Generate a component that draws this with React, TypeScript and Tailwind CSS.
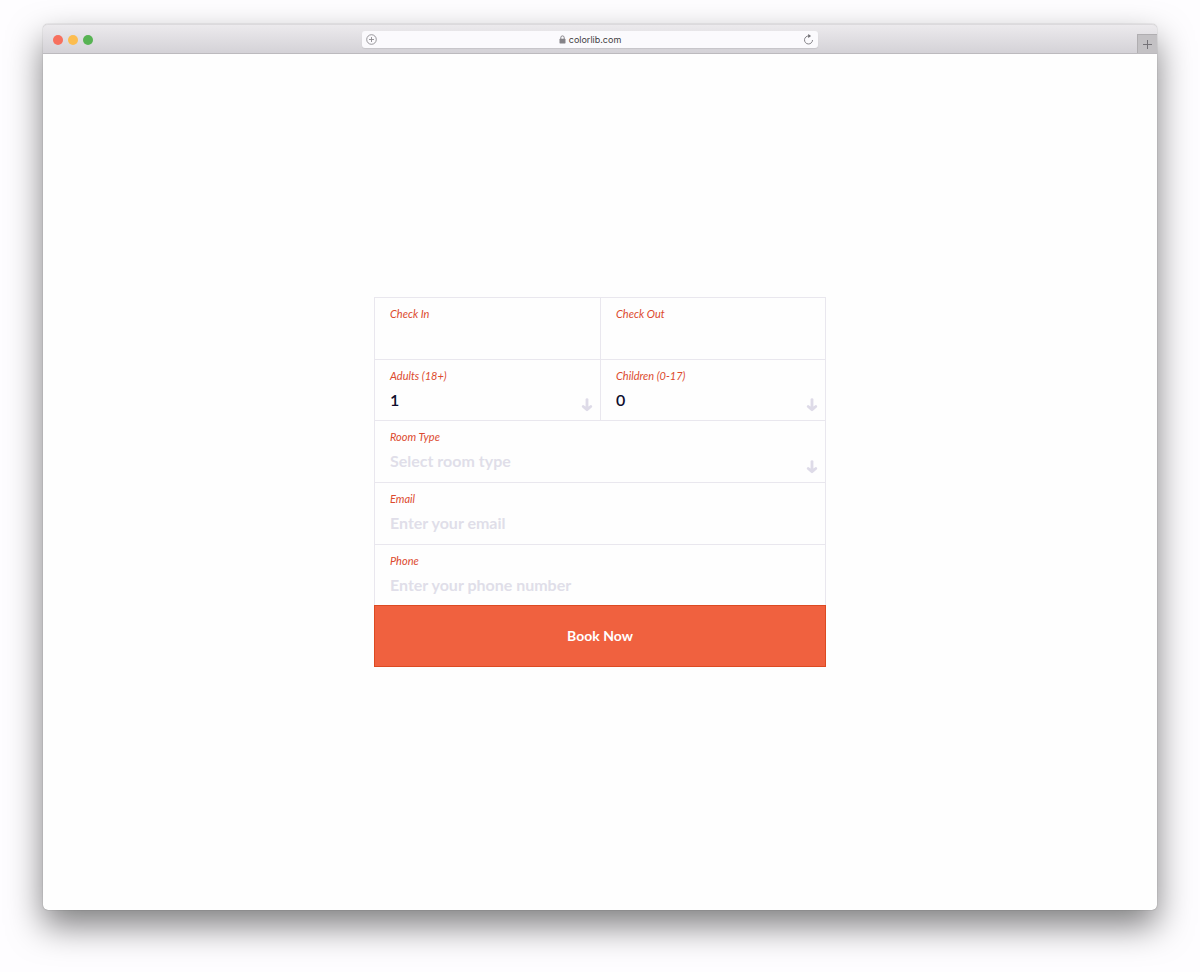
import { useState } from 'react';
import type { ReactNode } from 'react';

interface FieldProps {
  id: string;
  label: string;
  className?: string;
  children: ReactNode;
}

const CONTROL =
  'block h-6 w-full appearance-none rounded-none bg-transparent p-0 text-base leading-6 outline-none placeholder:font-bold placeholder:text-[#e0dee9] placeholder:opacity-100';

function Field({ id, label, className = '', children }: FieldProps) {
  return (
    <div className={`relative border-t border-l border-[#e9e7ee] px-[15px] pt-2 ${className}`}>
      <label htmlFor={id} className="block text-[11px] leading-4 font-normal text-[#dc4a2e] italic">
        {label}
      </label>
      <div className="mt-1">{children}</div>
    </div>
  );
}

function DownArrow() {
  return (
    <svg
      viewBox="0 0 12 14"
      className="pointer-events-none absolute right-[7px] bottom-2 h-[14px] w-3"
      fill="none"
      stroke="#dedbe8"
      aria-hidden="true"
    >
      <path d="M6 1.6v8" strokeWidth="2.8" strokeLinecap="round" />
      <path d="M2.2 8.5 6 11.8l3.8-3.3" strokeWidth="2.8" strokeLinecap="round" strokeLinejoin="round" />
      <path d="M3.2 8.4h5.6L6 11.8z" fill="#dedbe8" stroke="none" />
    </svg>
  );
}

function TitleBar() {
  return (
    <header className="flex h-[30px] items-center rounded-t-[5px] border-t border-b border-t-[#dcdadd] border-b-[#bcbabe] bg-linear-to-b from-[#eceaed] to-[#d4d2d7] pt-px">
      <div className="flex-1">
        <div className="flex gap-[5px] pl-[10px]">
          <button type="button" aria-label="Close" className="size-[10px] rounded-full bg-[#f7705e]" />
          <button type="button" aria-label="Minimize" className="size-[10px] rounded-full bg-[#fcbd4f]" />
          <button type="button" aria-label="Zoom" className="size-[10px] rounded-full bg-[#57b353]" />
        </div>
      </div>

      {/* Address bar */}
      <div className="flex h-[17px] w-full max-w-[456px] items-center justify-between rounded-[3px] bg-[#fbfafd] px-1 shadow-[0_1px_1px_rgba(0,0,0,0.08)]">
        <button type="button" aria-label="Add bookmark">
          <svg viewBox="0 0 11 11" className="size-[11px]" fill="none" stroke="#8d8b90" aria-hidden="true">
            <circle cx="5.5" cy="5.5" r="4.8" strokeWidth="0.9" />
            <path d="M5.5 3v5M3 5.5h5" strokeWidth="0.9" />
          </svg>
        </button>
        <div className="flex items-center gap-[3px] font-[Inter,sans-serif] text-[9px] leading-4 text-[#3f3d42]">
          <svg viewBox="0 0 7 9" className="h-[9px] w-[7px]" aria-hidden="true">
            <path d="M1.8 4V2.6a1.7 1.7 0 0 1 3.4 0V4" fill="none" stroke="#858388" strokeWidth="1" />
            <rect x="0.5" y="3.8" width="6" height="4.6" rx="0.6" fill="#858388" />
          </svg>
          colorlib.com
        </div>
        <button type="button" aria-label="Reload">
          <svg viewBox="0 0 11 11" className="size-[11px]" aria-hidden="true">
            <path d="M5.9 2A4 4 0 1 0 9.5 6" fill="none" stroke="#858388" strokeWidth="1" />
            <path d="M5.2 0v4l2.9-1.9z" fill="#6d6b70" />
          </svg>
        </button>
      </div>

      <div className="flex-1" />
      <button
        type="button"
        aria-label="New tab"
        className="flex h-[19px] w-5 items-center justify-center self-end border-t border-l border-[#b0aeb1] bg-[#c3c1c4]"
      >
        <svg viewBox="0 0 9 9" className="size-[9px]" stroke="#747277" aria-hidden="true">
          <path d="M4.5 0v9M0 4.5h9" strokeWidth="1" />
        </svg>
      </button>
    </header>
  );
}

function BookingForm() {
  const [adults, setAdults] = useState('1');
  const [children, setChildren] = useState('0');
  const [room, setRoom] = useState('');

  return (
    <form
      onSubmit={e => e.preventDefault()}
      className="grid min-h-[370px] w-full max-w-[452px] grid-cols-2 grid-rows-6 font-semibold text-[#0e0d2c]"
    >
      <Field id="check-in" label="Check In">
        <input id="check-in" type="text" className={CONTROL} />
      </Field>
      <Field id="check-out" label="Check Out" className="border-r">
        <input id="check-out" type="text" className={CONTROL} />
      </Field>

      <Field id="adults" label="Adults (18+)">
        <select id="adults" value={adults} onChange={e => setAdults(e.target.value)} className={CONTROL}>
          <option>1</option>
          <option>2</option>
          <option>3</option>
        </select>
        <DownArrow />
      </Field>
      <Field id="children" label="Children (0-17)" className="border-r">
        <select id="children" value={children} onChange={e => setChildren(e.target.value)} className={CONTROL}>
          <option>0</option>
          <option>1</option>
          <option>2</option>
        </select>
        <DownArrow />
      </Field>

      <Field id="room-type" label="Room Type" className="col-span-2 border-r">
        <select
          id="room-type"
          value={room}
          onChange={e => setRoom(e.target.value)}
          className={`${CONTROL} ${room ? '' : 'font-bold text-[#e0dee9]'}`}
        >
          <option value="" disabled hidden>
            Select room type
          </option>
          <option>Single</option>
          <option>Double</option>
        </select>
        <DownArrow />
      </Field>

      <Field id="email" label="Email" className="col-span-2 border-r">
        <input id="email" type="email" placeholder="Enter your email" className={CONTROL} />
      </Field>
      <Field id="phone" label="Phone" className="col-span-2 border-r">
        <input id="phone" type="tel" placeholder="Enter your phone number" className={CONTROL} />
      </Field>

      <button
        type="submit"
        className="col-span-2 border border-[#dc4a22] bg-[#f0613f] text-sm leading-5 font-bold text-white"
      >
        Book Now
      </button>
    </form>
  );
}

export default function App() {
  return (
    <div className="flex min-h-screen flex-col bg-[#fefdff] px-[43px] pt-6 pb-[62px] font-[Lato,sans-serif]">
      <div className="flex flex-1 flex-col rounded-[5px] bg-[#fefefe] shadow-[0_0_1px_rgba(0,0,0,0.5),0_16px_34px_rgba(0,0,0,0.5)]">
        <TitleBar />
        <main className="flex flex-1 items-center justify-center">
          <BookingForm />
        </main>
      </div>
    </div>
  );
}
